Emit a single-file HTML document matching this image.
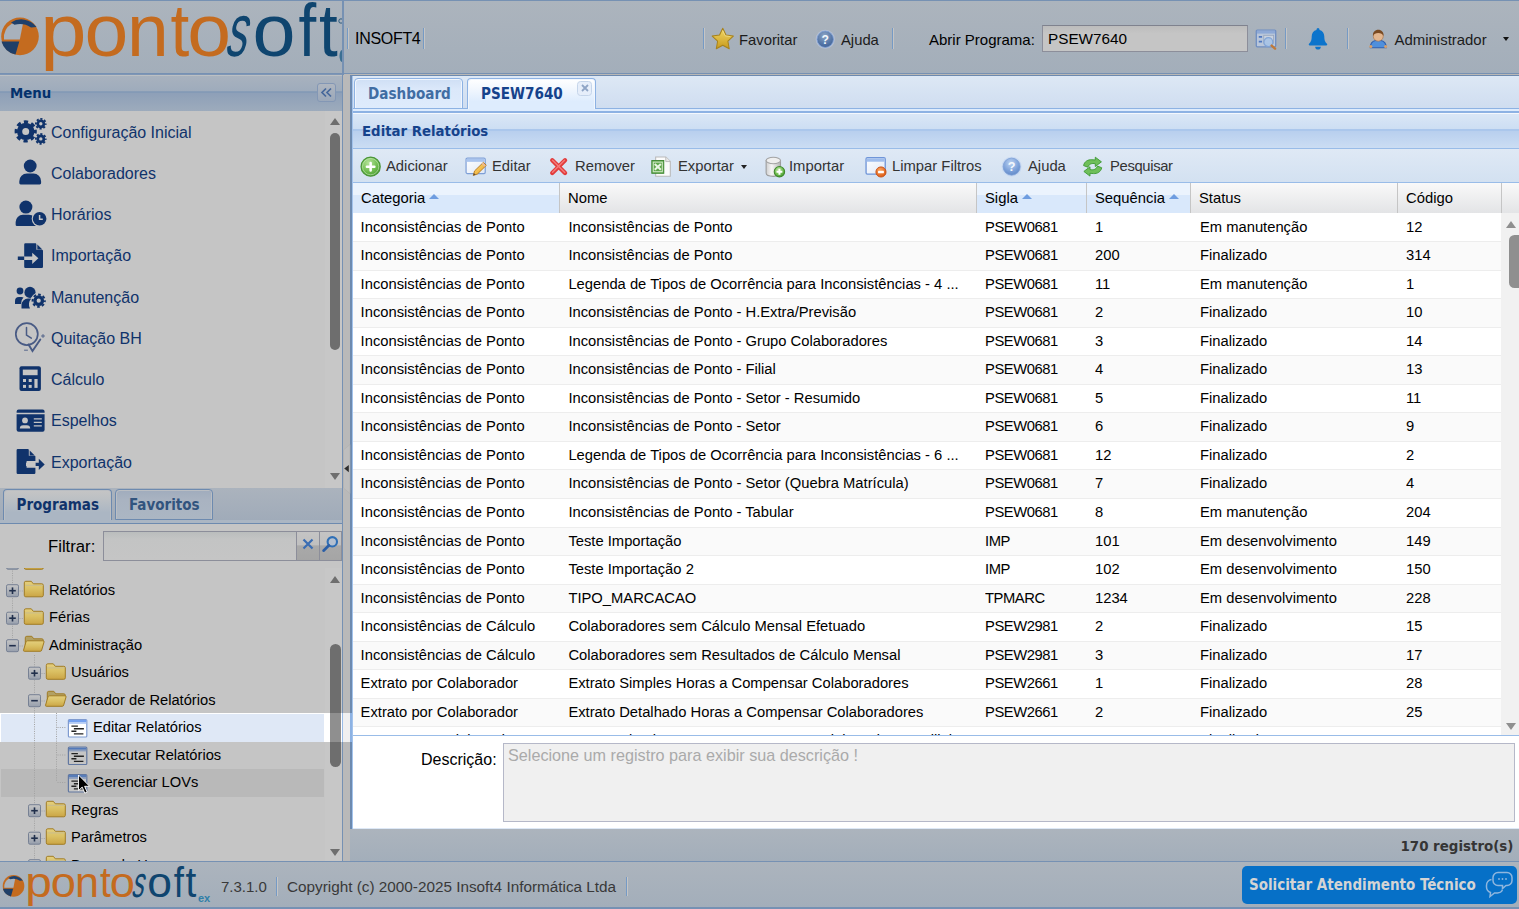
<!DOCTYPE html>
<html lang="pt-BR"><head><meta charset="utf-8"><title>Editar Relatórios</title>
<style>
html,body{margin:0;padding:0;}
body{width:1519px;height:909px;overflow:hidden;position:relative;background:#a3aeba;
  font-family:"Liberation Sans","DejaVu Sans Condensed",sans-serif;font-size:14.7px;color:#000;}
.abs{position:absolute;}
.b{font-family:"DejaVu Sans Condensed","Liberation Sans",sans-serif;font-weight:bold;}
div,span{box-sizing:border-box;}
.t{position:absolute;white-space:nowrap;line-height:20px;height:20px;}
svg{position:absolute;overflow:visible;}
#hdr{left:0;top:0;width:1519px;height:75px;background:linear-gradient(#acb4bd,#a3aeba);border-top:1px solid #7691b3;border-bottom:2px solid #7691b3;}
.vsep{position:absolute;width:1px;background:#759ac5;top:27px;height:21px;}
.vsep:after{content:"";position:absolute;left:1px;top:0;width:1px;height:100%;background:#c5c5c5;}
#left{left:0;top:75px;width:342px;height:786px;background:#c5c5c5;}
#menuhd{left:0;top:0;width:342px;height:36px;background:linear-gradient(#bcc0c3 0,#bcc0c3 1px,#a8b2be 1px,#9eabbc 45%,#849ab6 46%,#849ab6 50%,#8ea0b8 51%,#9dabbc 100%);}
.mi{position:absolute;left:51px;white-space:nowrap;font-size:16px;line-height:22px;color:#10336b;}
#center{left:353px;top:76px;width:1166px;height:753px;background:#fff;}
.grow{position:absolute;left:0;width:1148px;height:28.53px;border-bottom:1px solid #ededed;background:#fff;}
.grow.alt{background:#fafafa;}
.c{position:absolute;top:0;line-height:27.6px;white-space:nowrap;overflow:hidden;font-size:14.75px}
.c0{left:7.6px;width:195px}.c1{left:215.4px;width:405px}.c2{left:632px;width:100px;letter-spacing:-0.45px}.c3{left:742px;width:95px}.c4{left:847px;width:195px}.c5{left:1053px;width:90px}
#tabbar{left:0;top:0;width:1166px;height:33px;background:linear-gradient(#dde8f5,#cfddf0);border-bottom:1px solid #8db2e3;z-index:1}
.tab{position:absolute;top:2px;height:31px;border:1px solid #8db2e3;border-radius:4px 4px 0 0;background:linear-gradient(#cfdff5 0,#dbe8fa 35%,#deebfc 100%);box-shadow:inset 1px 1px 0 #f1f6fd,inset -1px 0 0 #f1f6fd;}
.tab.act{background:linear-gradient(#ffffff 0,#f3f8fe 30%,#deecfd 75%,#deecfd 100%);height:31px;border-bottom:none}
.tab .t{top:4.5px;font-size:15.1px;color:#416da3;}
.tab.act .t{color:#15428b;}
#tstrip{left:0;top:33px;width:1166px;height:4px;background:#deecfd;border-bottom:2px solid #8db2e3;}
#phd{left:0;top:37px;width:1166px;height:36px;border-bottom:1px solid #99bce8;background:linear-gradient(#f4f8fd 0,#f4f8fd 1px,#dae7f6 1px,#cddef3 45%,#abc7ec 46%,#abc7ec 50%,#b8cfee 51%,#cbddf3 100%);}
#tb{left:0;top:73px;width:1166px;height:34px;background:linear-gradient(#dfe9f5,#d3e1f1);border-bottom:1px solid #99bce8;}
#tb .t{top:7.2px;color:#333;font-size:14.8px}
#ghd{left:0;top:107px;width:1166px;height:30px;background:linear-gradient(#f9f9f9,#e3e4e6);}
.gh{position:absolute;top:0;height:30px;border-right:1px solid #c5c5c5;line-height:30px;padding-left:8px;font-size:14.8px;white-space:nowrap;}
.gh.s{background:linear-gradient(#ebf3fd 0,#ebf3fd 40%,#d9e8fb 41%,#d9e8fb 100%);}
.gh i{display:inline-block;width:0;height:0;border:5px solid transparent;border-top:0;border-bottom:5px solid #6f9de0;margin-left:4px;vertical-align:4px}
.ltab{position:absolute;border:1px solid #6d8aaf;border-radius:4px 4px 0 0;background:linear-gradient(#a0acbd,#a9b3c1 35%,#abb6c3);box-shadow:inset 1px 1px 0 #babec3,inset -1px 0 0 #babec3;}
.ltab.act{background:linear-gradient(#c5c5c5 0,#bcc0c4 30%,#abb6c3 75%,#abb6c3 100%);border-bottom:none}
.ltab .t{font-size:15px;color:#32547e}
.ltab.act .t{color:#10336b}
.trg{width:23px;height:30px;border:1px solid #8c8e9a;border-left:none;background:linear-gradient(#c4c4c4 0,#c0c0c0 45%,#a9a9a9 50%,#a5a5a5 100%);}
</style></head>
<body>
<svg width="0" height="0" style="left:-10px;top:-10px"><defs>
<radialGradient id="gAdd" cx="0.4" cy="0.3" r="0.8"><stop offset="0" stop-color="#b5e39a"/><stop offset="0.6" stop-color="#6cba4c"/><stop offset="1" stop-color="#3f8f2c"/></radialGradient>
<radialGradient id="gHelp" cx="0.45" cy="0.3" r="0.8"><stop offset="0" stop-color="#bdd3f2"/><stop offset="0.6" stop-color="#7a9fd8"/><stop offset="1" stop-color="#5a82c2"/></radialGradient>
<radialGradient id="gHelpM" cx="0.45" cy="0.3" r="0.8"><stop offset="0" stop-color="#8ea6c6"/><stop offset="0.6" stop-color="#5576a7"/><stop offset="1" stop-color="#3a5c92"/></radialGradient>
<radialGradient id="gOr" cx="0.4" cy="0.3" r="0.8"><stop offset="0" stop-color="#f9a15a"/><stop offset="1" stop-color="#d9540f"/></radialGradient>
<linearGradient id="gWin" x1="0" y1="0" x2="1" y2="1"><stop offset="0" stop-color="#fff"/><stop offset="1" stop-color="#dfe8f6"/></linearGradient>
<linearGradient id="gPen" x1="0" y1="0" x2="1" y2="1"><stop offset="0" stop-color="#ffe27a"/><stop offset="1" stop-color="#e79a22"/></linearGradient>
<linearGradient id="gDb" x1="0" y1="0" x2="1" y2="0"><stop offset="0" stop-color="#d0d0d0"/><stop offset="0.4" stop-color="#f6f6f6"/><stop offset="1" stop-color="#b4b4b4"/></linearGradient>
<linearGradient id="gFold" x1="0" y1="0" x2="0" y2="1"><stop offset="0" stop-color="#f7dc83"/><stop offset="1" stop-color="#d9a93c"/></linearGradient>
<linearGradient id="gFoldM" x1="0" y1="0" x2="0" y2="1"><stop offset="0" stop-color="#e4cf7e"/><stop offset="0.5" stop-color="#dac063"/><stop offset="1" stop-color="#cba545"/></linearGradient>
<linearGradient id="gStar" x1="0" y1="0" x2="0" y2="1"><stop offset="0" stop-color="#f2d867"/><stop offset="1" stop-color="#c89a1c"/></linearGradient>
</defs></svg><div id="hdr" class="abs">
<svg width="342" height="73" style="left:0;top:-1px;overflow:hidden" viewBox="0 0 342 73"><circle cx="20" cy="36.400" r="18.800" fill="#c46b1f"/><path d="M23.500 21 L19.800 39.500 L4 39.500 A17 17 0 0 1 12 23.500 Z" fill="#a8b1bc"/><path d="M11 22.500 A18.800 18.800 0 0 1 36.500 27 L31 27.500 A20 20 0 0 0 14.500 24.800 Z" fill="#1f406b"/><path d="M1.500 41.500 L19.300 41.500 L15.500 54.600 A18.800 18.800 0 0 1 1.500 41.500 Z" fill="#1f3f68"/><text transform="translate(40.2 55.6) scale(1.11 1) " font-family="Liberation Sans, sans-serif" font-size="75" fill="#c46b1f">p</text><text transform="translate(84.6 55.6) scale(1.05 1) " font-family="Liberation Sans, sans-serif" font-size="75" fill="#c46b1f">o</text><text transform="translate(127 55.6) scale(1.0 1) " font-family="Liberation Sans, sans-serif" font-size="75" fill="#c46b1f">n</text><text transform="translate(170.5 55.6) scale(0.9 1) " font-family="Liberation Sans, sans-serif" font-size="75" fill="#c46b1f">t</text><text transform="translate(187.3 55.6) scale(1.05 1) " font-family="Liberation Sans, sans-serif" font-size="75" fill="#c46b1f">o</text><text transform="translate(224 55.6) scale(0.56 1) skewX(-22)" font-family="Liberation Sans, sans-serif" font-size="75" fill="#0f456f">s</text><text transform="translate(252.6 55.6) scale(1.03 1) " font-family="Liberation Sans, sans-serif" font-size="75" fill="#0f456f">o</text><text transform="translate(298.5 55.6) scale(0.85 1) " font-family="Liberation Sans, sans-serif" font-size="75" fill="#0f456f">f</text><text transform="translate(319 55.6) scale(0.9 1) " font-family="Liberation Sans, sans-serif" font-size="75" fill="#0f456f">t</text><circle cx="341" cy="21" r="2.200" fill="none" stroke="#0f456f" stroke-width="0.800"/><ellipse cx="342" cy="56" rx="2.500" ry="6" fill="#3b6f93"/></svg>
<div class="abs" style="left:342px;top:-1px;width:2px;height:74px;background:#7691b3"></div>
<div class="vsep" style="left:346.500px"></div>
<div class="t" style="left:355px;top:27.500px;font-size:16px;letter-spacing:-0.300px">INSOFT4</div>
<div class="vsep" style="left:423px"></div>
<div class="vsep" style="left:703px"></div>
<svg style="left:711px;top:25.5px" width="23.5" height="23.5" viewBox="0 0 16 16"><path d="M8 .800l2.200 4.700 5 .700-3.700 3.500.900 5.100L8 12.400l-4.400 2.400.900-5.100L.800 6.200l5-.700z" fill="url(#gStar)" stroke="#a7821d" stroke-width="0.700" stroke-linejoin="round"/><path d="M8 2.500l1.600 3.500 3.600.500" fill="none" stroke="#f3e39a" stroke-width="0.600" opacity="0.700"/></svg>
<div class="t" style="left:739px;top:28.700px;font-size:14.800px;color:#1c1c1c">Favoritar</div>
<svg style="left:814.5px;top:27.5px" width="20.5" height="20.5" viewBox="0 0 16 16"><circle cx="8" cy="8" r="7.5" fill="#b4bfd2"/><circle cx="8" cy="8" r="6.4" fill="url(#gHelpM)" stroke="#7d9fd6" stroke-width="0.6"/><text x="8" y="11.600" text-anchor="middle" font-family="Liberation Sans, sans-serif" font-weight="bold" font-size="9.500" fill="#f4f8fd">?</text></svg>
<div class="t" style="left:841px;top:28.700px;font-size:14.800px;color:#1c1c1c">Ajuda</div>
<div class="vsep" style="left:892px"></div>
<div class="t" style="left:929px;top:28.700px;font-size:15px">Abrir Programa:</div>
<div class="abs" style="left:1042px;top:24px;width:206px;height:27px;background:linear-gradient(#bcbcbc,#c5c5c5 30%);border:1px solid #8c8e9a;border-top-color:#7f828e"></div>
<div class="t" style="left:1048px;top:27.500px;font-size:15.300px">PSEW7640</div>
<svg style="left:1255px;top:27.6px" width="22" height="21" viewBox="0 0 16 16"><rect x="0.600" y="0.800" width="14.800" height="12.800" rx="0.800" fill="#b9c6da" stroke="#6f8ec2" stroke-width="1"/><rect x="1.100" y="1.300" width="13.800" height="2.200" fill="#8ea9d6"/><path d="M2.500 6h2.500M2.500 9.600h2.500" stroke="#4f78c0" stroke-width="1.300"/><rect x="6.300" y="4.800" width="7.500" height="6" fill="#c9d2df" stroke="#97a5bb" stroke-width="0.600"/><circle cx="9.800" cy="10" r="3.400" fill="#a9c4e6" stroke="#7fa3d6" stroke-width="0.900" opacity="0.950"/><path d="M12.300 12.600l2.600 2.400" stroke="#c07a3a" stroke-width="1.800" stroke-linecap="round"/></svg>
<div class="vsep" style="left:1284.500px"></div>
<svg style="left:1307px;top:25.500px" width="22" height="24" viewBox="0 0 22 24"><path d="M11 1a1.500 1.500 0 0 1 1.500 1.500v.600c3 .700 4.800 3.300 4.800 6.400 0 4.500 1.300 5.900 2.700 7.200.500.500.300 1.800-.800 1.800H2.800c-1.100 0-1.300-1.300-.800-1.800 1.400-1.300 2.700-2.700 2.700-7.200 0-3.100 1.800-5.700 4.800-6.400v-.600A1.500 1.500 0 0 1 11 1zM8.200 19.800h5.600a2.800 2.800 0 0 1 -5.600 0z" fill="#0c74cc"/></svg>
<div class="vsep" style="left:1347px"></div>
<svg style="left:1367.5px;top:27.8px" width="20.5" height="20.5" viewBox="0 0 16 16"><path d="M1.800 14.600c0-3.500 2.300-5.200 4-5.600h4.400c1.700.400 4 2.100 4 5.600z" fill="#4f8fdc" stroke="#2f5fae" stroke-width="0.900"/><circle cx="2.200" cy="13.600" r="1.200" fill="#d9a06a"/><circle cx="13.800" cy="13.600" r="1.200" fill="#d9a06a"/><circle cx="8" cy="5.600" r="3.900" fill="#e3b68f" stroke="#a9744a" stroke-width="0.500"/><path d="M3.900 5.400c-.300-3 1.600-4.800 4.100-4.800s4.400 1.800 4.100 4.800c-.900-1.500-2-2.200-4.100-2.200s-3.200.700-4.100 2.200z" fill="#7a4a22"/></svg>
<div class="t" style="left:1394.500px;top:28.700px;font-size:14.950px;color:#1c1c1c">Administrador</div>
<div class="abs" style="left:1503px;top:36.300px;width:0;height:0;border:3.650px solid transparent;border-top:4.600px solid #111;"></div>
</div>
<div class="abs" style="left:0;top:74px;width:342px;height:1px;background:#7f96b5"></div>
<div class="abs" style="left:344px;top:74px;width:1175px;height:1px;background:#b9b8b6"></div>
<div class="abs" style="left:343px;top:75px;width:7px;height:786px;background:#b9b9b9"></div>
<div class="abs" style="left:350px;top:75px;width:1169px;height:1px;background:#6d8aaf"></div>
<div class="abs" style="left:350px;top:75px;width:2px;height:786px;background:#6d8aaf"></div>
<div class="abs" style="left:352px;top:76px;width:1px;height:753px;background:#a3c3ec"></div><div id="left" class="abs">
<div id="menuhd" class="abs"><div class="t b" style="left:10px;top:7.500px;color:#03316c;font-size:14.800px">Menu</div></div>
<div class="abs" style="left:342px;top:-1px;width:1px;height:787px;background:#7691b3"></div>
<svg width="342" height="500" viewBox="0 74 342 500" style="left:0;top:-1px"><circle cx="25.7" cy="131.4" r="6.10" fill="none" stroke="#10336b" stroke-width="5.20"/><circle cx="25.7" cy="131.4" r="9.50" fill="none" stroke="#10336b" stroke-width="3.20" stroke-dasharray="4.178 3.283" stroke-dashoffset="2.089"/><circle cx="40.8" cy="123.8" r="3.05" fill="none" stroke="#10336b" stroke-width="2.70"/><circle cx="40.8" cy="123.8" r="4.90" fill="none" stroke="#10336b" stroke-width="1.80" stroke-dasharray="2.155 1.693" stroke-dashoffset="1.078"/><circle cx="40.8" cy="138.9" r="3.05" fill="none" stroke="#10336b" stroke-width="2.70"/><circle cx="40.8" cy="138.9" r="4.90" fill="none" stroke="#10336b" stroke-width="1.80" stroke-dasharray="2.155 1.693" stroke-dashoffset="1.078"/><circle cx="30.2" cy="166.0" r="6.4" fill="#10336b"/><path d="M19.299999999999997 183.1 v-1.87 a7.63 7.63 0 0 1 7.63 -7.63 h6.540000000000001 a7.63 7.63 0 0 1 7.63 7.63 v1.87 a1.3 1.3 0 0 1 -1.3 1.3 h-19.2 a1.3 1.3 0 0 1 -1.3 -1.3z" fill="#10336b"/><circle cx="25.9" cy="207.1" r="6.5" fill="#10336b"/><path d="M15.649999999999999 224.69999999999996 v-2.7249999999999988 a7.175 7.175 0 0 1 7.175 -7.175 h6.15 a7.175 7.175 0 0 1 7.175 7.175 v2.7249999999999988 a1.3 1.3 0 0 1 -1.3 1.3 h-17.9 a1.3 1.3 0 0 1 -1.3 -1.3z" fill="#10336b"/><circle cx="39.6" cy="218.8" r="7.9" fill="#c5c5c5"/><circle cx="39.6" cy="218.8" r="6.8" fill="#10336b"/><path d="M39.6 215v4.2h3.2" fill="none" stroke="#c5c5c5" stroke-width="1.5"/><path d="M24.2 243.2h11.5l7.300 7.300v16.200a1.200 1.200 0 0 1 -1.200 1.200h-16.400a1.200 1.200 0 0 1 -1.200 -1.200v-6.600h8v3.800l6.200-5.600-6.200-5.600v3.900h-8v-12.200a1.200 1.200 0 0 1 1.200 -1.200z" fill="#10336b"/><path d="M36.400 243.2v6.600h6.600z" fill="#c5c5c5"/><path d="M37.300 244.600l5 5h-5z" fill="#10336b"/><rect x="17.800" y="256.500" width="6.400" height="3.500" fill="#10336b"/><circle cx="20" cy="291" r="3.400" fill="#10336b"/><path d="M15 304v-3a4 4 0 0 1 4-4h2.500a4 4 0 0 1 2 .6 8 8 0 0 0-2.500 6.400z" fill="#10336b"/><circle cx="30" cy="292.400" r="5.600" fill="#10336b"/><path d="M21.500 308.500v-3.500a6.500 6.500 0 0 1 6.500-6.500h3.600a8 8 0 0 0 -1.600 10z" fill="#10336b"/><circle cx="38.700" cy="300.700" r="8" fill="#c5c5c5"/><circle cx="38.7" cy="300.7" r="3.75" fill="none" stroke="#10336b" stroke-width="3.30"/><circle cx="38.7" cy="300.7" r="6.10" fill="none" stroke="#10336b" stroke-width="2.00" stroke-dasharray="2.683 2.108" stroke-dashoffset="1.341"/><g fill="none" stroke="#34497a" stroke-linecap="round" opacity="0.85"><circle cx="26.800" cy="334.100" r="11" stroke-width="1.700"/><path d="M26.500 327.500v7.500l4.800 3.200" stroke-width="1.500"/><path d="M28.500 344.500l4 6.500 7.800-11.500" stroke-width="1.900"/><path d="M41.500 336h3M43 334.500v3M24.500 350.200h3" stroke-width="0.900"/></g><rect x="19.500" y="366.200" width="21.400" height="24.700" rx="2" fill="#10336b"/><rect x="22.800" y="369.600" width="14.800" height="5.600" fill="#c5c5c5"/><rect x="23" y="379" width="3" height="3" fill="#c5c5c5"/><rect x="28.7" y="379" width="3" height="3" fill="#c5c5c5"/><rect x="34.4" y="379" width="3.2" height="8.9" fill="#c5c5c5"/><rect x="23" y="384.9" width="3" height="3" fill="#c5c5c5"/><rect x="28.7" y="384.9" width="3" height="3" fill="#c5c5c5"/><path d="M16.600 411.400a2 2 0 0 1 2-2h24a2 2 0 0 1 2 2v1.400h-28z" fill="#10336b"/><path d="M16.600 414.200h28v15.600a2 2 0 0 1 -2 2h-24a2 2 0 0 1 -2 -2z" fill="#10336b"/><circle cx="25" cy="420.400" r="2.900" fill="#c5c5c5"/><path d="M19.800 428.600a3.400 3.400 0 0 1 3.400-3.400h3.600a3.400 3.400 0 0 1 3.400 3.400z" fill="#c5c5c5"/><path d="M33.800 418.800h8M33.800 422.300h8M33.800 425.800h8" stroke="#c5c5c5" stroke-width="1.300"/><path d="M17.800 449.100h10.400l7.200 7.200v4.800h-8.800v6.600h8.800v5a1.200 1.200 0 0 1 -1.200 1.200h-16.400a1.200 1.200 0 0 1 -1.200 -1.200v-22.400a1.200 1.200 0 0 1 1.200 -1.200z" fill="#10336b"/><path d="M28.800 449.100v6.600h6.600z" fill="#c5c5c5"/><path d="M29.700 450.400l5 5h-5z" fill="#10336b"/><path d="M35.400 462.700h3.400v-4l5.900 5.700-5.900 5.700v-4h-3.400z" fill="#10336b"/><rect x="26" y="462.600" width="9.400" height="3.500" fill="#c5c5c5"/></svg>
<div class="mi" style="top:46.5px">Configuração Inicial</div>
<div class="mi" style="top:87.8px">Colaboradores</div>
<div class="mi" style="top:129.0px">Horários</div>
<div class="mi" style="top:170.2px">Importação</div>
<div class="mi" style="top:211.5px">Manutenção</div>
<div class="mi" style="top:252.8px">Quitação BH</div>
<div class="mi" style="top:294.0px">Cálculo</div>
<div class="mi" style="top:335.2px">Espelhos</div>
<div class="mi" style="top:376.5px">Exportação</div>
<div class="abs" style="left:317px;top:8px;width:19px;height:19px;border:1px solid #8397b5;border-radius:3px;background:linear-gradient(#afb6c0,#9ba8ba)"></div>
<svg style="left:320px;top:12px" width="13" height="11" viewBox="0 0 13 11"><path d="M6 1.500L2 5.500l4 4M11 1.500L7 5.500l4 4" fill="none" stroke="#46689b" stroke-width="1.700"/></svg>
<div class="abs" style="left:325px;top:36px;width:17px;height:377px;background:#c7c7c7"></div>
<div class="abs" style="left:330px;top:43px;width:0;height:0;border:5px solid transparent;border-top:0;border-bottom:7px solid #6e6e6e"></div>
<div class="abs" style="left:329.500px;top:58px;width:10.500px;height:217px;border-radius:5px;background:#6e6e6e"></div>
<div class="abs" style="left:330px;top:398px;width:0;height:0;border:5px solid transparent;border-bottom:0;border-top:7px solid #6e6e6e"></div>
<div class="abs" style="left:0;top:413px;width:342px;height:32px;background:linear-gradient(#abb3bd,#a0abb9)"></div>
<div class="abs" style="left:0;top:445px;width:342px;height:4px;background:#abb6c3;border-bottom:1px solid #6d8aaf"></div>
<div class="ltab act" style="left:3px;top:414px;width:109px;height:31px"><div class="t b" style="left:12.500px;top:4.500px">Programas</div></div>
<div class="ltab" style="left:115px;top:414px;width:98px;height:31px"><div class="t b" style="left:13px;top:4.500px">Favoritos</div></div>
<div class="t" style="left:48px;top:461.5px;font-size:16.700px">Filtrar:</div>
<div class="abs" style="left:103px;top:456px;width:194px;height:30px;border:1px solid #8c8e9a;background:linear-gradient(#babdbd 0,#c3c4c4 25%,#c5c5c5 100%)"></div>
<div class="abs trg" style="left:296.500px;top:456px"></div><div class="abs trg" style="left:319.500px;top:456px;width:22.500px"></div>
<svg style="left:301.500px;top:463px" width="12" height="12" viewBox="0 0 12 12"><path d="M1.500 1.500l9 9M10.500 1.500l-9 9" stroke="#3a6db3" stroke-width="2.200"/></svg>
<svg style="left:321px;top:460px" width="19" height="19" viewBox="0 0 19 19"><circle cx="11.300" cy="6.800" r="4.700" fill="#b4c0d0" stroke="#2f6fb6" stroke-width="2.100"/><path d="M8 10.300L2.500 15.700" stroke="#2a5ea6" stroke-width="2.600" stroke-linecap="round"/></svg>
<div class="abs" style="left:0;top:493px;width:342px;height:293px;overflow:hidden" id="tree">
<div class="abs" style="left:0;top:145px;width:342px;height:29px;background:#fff"></div>
<div class="abs" style="left:1px;top:146px;width:323px;height:28px;background:#dfe8f6"></div>
<div class="abs" style="left:1px;top:201px;width:323px;height:27.500px;background:#b9b9b9"></div>
<div class="t" style="left:49px;top:11.5px;font-size:14.700px">Relatórios</div>
<div class="t" style="left:49px;top:39.0px;font-size:14.700px">Férias</div>
<div class="t" style="left:49px;top:66.5px;font-size:14.700px">Administração</div>
<div class="t" style="left:71px;top:94.0px;font-size:14.700px">Usuários</div>
<div class="t" style="left:71px;top:121.5px;font-size:14.700px">Gerador de Relatórios</div>
<div class="t" style="left:93px;top:149.0px;font-size:14.700px">Editar Relatórios</div>
<div class="t" style="left:93px;top:176.5px;font-size:14.700px">Executar Relatórios</div>
<div class="t" style="left:93px;top:204.0px;font-size:14.700px">Gerenciar LOVs</div>
<div class="t" style="left:71px;top:231.5px;font-size:14.700px">Regras</div>
<div class="t" style="left:71px;top:259.0px;font-size:14.700px">Parâmetros</div>
<div class="t" style="left:71px;top:286.5px;font-size:14.700px">Banco de Horas</div>
<svg style="left:0;top:0" width="342" height="293" viewBox="0 568 342 293"><defs><linearGradient id="gBox" x1="0" y1="0" x2="0" y2="1"><stop offset="0" stop-color="#c5c5c5"/><stop offset="1" stop-color="#979fad"/></linearGradient></defs><path d="M12.5 566V638" stroke="#a2a2a2" stroke-width="1" stroke-dasharray="1 1.300"/><path d="M34.5 655V861" stroke="#a2a2a2" stroke-width="1" stroke-dasharray="1 1.300"/><path d="M56.5 713V782" stroke="#a2a2a2" stroke-width="1" stroke-dasharray="1 1.300"/><rect x="6.5" y="557.2" width="12" height="12" rx="1.500" fill="url(#gBox)" stroke="#778194" stroke-width="1"/><path d="M9.2 563.2h6.600" stroke="#212f4c" stroke-width="1.600"/><path d="M12.5 559.9000000000001v6.600" stroke="#212f4c" stroke-width="1.600"/><path d="M19.5 563.5H23.5" stroke="#a2a2a2" stroke-width="1" stroke-dasharray="1 1.300"/><path d="M24.3 567.8v-12.500a1.500 1.500 0 0 1 1.500-1.500h5.500l2 2.500h8.500a1.500 1.500 0 0 1 1.500 1.500v10a1.500 1.500 0 0 1 -1.500 1.500h-16a1.500 1.500 0 0 1 -1.500-1.500z" fill="url(#gFoldM)" stroke="#a17c25" stroke-width="1"/><path d="M25.3 557.9h17.500" stroke="#c5bc94" stroke-width="1" opacity="0.800"/><rect x="6.5" y="584.7" width="12" height="12" rx="1.500" fill="url(#gBox)" stroke="#778194" stroke-width="1"/><path d="M9.2 590.7h6.600" stroke="#212f4c" stroke-width="1.600"/><path d="M12.5 587.4000000000001v6.600" stroke="#212f4c" stroke-width="1.600"/><path d="M19.5 591.0H23.5" stroke="#a2a2a2" stroke-width="1" stroke-dasharray="1 1.300"/><path d="M24.3 595.3v-12.500a1.500 1.500 0 0 1 1.500-1.500h5.500l2 2.500h8.500a1.500 1.500 0 0 1 1.500 1.500v10a1.500 1.500 0 0 1 -1.500 1.500h-16a1.500 1.500 0 0 1 -1.500-1.500z" fill="url(#gFoldM)" stroke="#a17c25" stroke-width="1"/><path d="M25.3 585.4h17.500" stroke="#c5bc94" stroke-width="1" opacity="0.800"/><rect x="6.5" y="612.2" width="12" height="12" rx="1.500" fill="url(#gBox)" stroke="#778194" stroke-width="1"/><path d="M9.2 618.2h6.600" stroke="#212f4c" stroke-width="1.600"/><path d="M12.5 614.9000000000001v6.600" stroke="#212f4c" stroke-width="1.600"/><path d="M19.5 618.5H23.5" stroke="#a2a2a2" stroke-width="1" stroke-dasharray="1 1.300"/><path d="M24.3 622.8v-12.500a1.500 1.500 0 0 1 1.500-1.500h5.500l2 2.500h8.500a1.500 1.500 0 0 1 1.500 1.500v10a1.500 1.500 0 0 1 -1.500 1.500h-16a1.500 1.500 0 0 1 -1.500-1.500z" fill="url(#gFoldM)" stroke="#a17c25" stroke-width="1"/><path d="M25.3 612.9h17.500" stroke="#c5bc94" stroke-width="1" opacity="0.800"/><rect x="6.5" y="639.7" width="12" height="12" rx="1.500" fill="url(#gBox)" stroke="#778194" stroke-width="1"/><path d="M9.2 645.7h6.600" stroke="#212f4c" stroke-width="1.600"/><path d="M19.5 646.0H23.5" stroke="#a2a2a2" stroke-width="1" stroke-dasharray="1 1.300"/><path d="M25.3 648.8v-11a1.500 1.500 0 0 1 1.500-1.500h5l2 2.500h8a1.500 1.500 0 0 1 1.500 1.500v2.500" fill="#b2a063" stroke="#a17c25" stroke-width="1"/><path d="M23.5 650.3l2.500-8.500a1.500 1.500 0 0 1 1.500-1h15.500a1 1 0 0 1 1 1.300l-2.300 8a1.500 1.500 0 0 1 -1.500 1.200h-15.500a1 1 0 0 1 -1.200-1z" fill="url(#gFoldM)" stroke="#a17c25" stroke-width="1"/><rect x="28.5" y="667.2" width="12" height="12" rx="1.500" fill="url(#gBox)" stroke="#778194" stroke-width="1"/><path d="M31.2 673.2h6.600" stroke="#212f4c" stroke-width="1.600"/><path d="M34.5 669.9000000000001v6.600" stroke="#212f4c" stroke-width="1.600"/><path d="M41.5 673.5H45.5" stroke="#a2a2a2" stroke-width="1" stroke-dasharray="1 1.300"/><path d="M46.3 677.8v-12.500a1.500 1.500 0 0 1 1.500-1.500h5.500l2 2.500h8.500a1.500 1.500 0 0 1 1.500 1.500v10a1.500 1.500 0 0 1 -1.500 1.500h-16a1.500 1.500 0 0 1 -1.500-1.500z" fill="url(#gFoldM)" stroke="#a17c25" stroke-width="1"/><path d="M47.3 667.9h17.500" stroke="#c5bc94" stroke-width="1" opacity="0.800"/><rect x="28.5" y="694.7" width="12" height="12" rx="1.500" fill="url(#gBox)" stroke="#778194" stroke-width="1"/><path d="M31.2 700.7h6.600" stroke="#212f4c" stroke-width="1.600"/><path d="M41.5 701.0H45.5" stroke="#a2a2a2" stroke-width="1" stroke-dasharray="1 1.300"/><path d="M47.3 703.8v-11a1.500 1.500 0 0 1 1.500-1.500h5l2 2.500h8a1.500 1.500 0 0 1 1.500 1.500v2.500" fill="#b2a063" stroke="#a17c25" stroke-width="1"/><path d="M45.5 705.3l2.500-8.500a1.500 1.500 0 0 1 1.500-1h15.500a1 1 0 0 1 1 1.300l-2.300 8a1.500 1.500 0 0 1 -1.500 1.200h-15.500a1 1 0 0 1 -1.200-1z" fill="url(#gFoldM)" stroke="#a17c25" stroke-width="1"/><path d="M57.5 727.5H66" stroke="#a2a2a2" stroke-width="1" stroke-dasharray="1 1.300"/><rect x="68.4" y="719.5" width="18.400" height="17.500" rx="1" fill="#ffffff" stroke="#7f9bd0" stroke-width="1.200"/><rect x="69.0" y="720.1" width="17.200" height="3.800" fill="#b5cdf6"/><rect x="69.0" y="720.1" width="17.200" height="1.800" fill="#6c9cf0"/><path d="M71.4 726.1h6.500M73.9 728.7h10M71.4 731.3h5M73.9 733.9h9.500" stroke="#222" stroke-width="1.400"/><path d="M57.5 755.0H66" stroke="#a2a2a2" stroke-width="1" stroke-dasharray="1 1.300"/><rect x="68.4" y="747.0" width="18.400" height="17.500" rx="1" fill="#c5c5c5" stroke="#6278a1" stroke-width="1.200"/><rect x="69.0" y="747.6" width="17.200" height="3.800" fill="#8c9ebe"/><rect x="69.0" y="747.6" width="17.200" height="1.800" fill="#5379b9"/><path d="M71.4 753.6h6.500M73.9 756.2h10M71.4 758.8h5M73.9 761.4h9.500" stroke="#222" stroke-width="1.400"/><path d="M57.5 782.5H66" stroke="#a2a2a2" stroke-width="1" stroke-dasharray="1 1.300"/><rect x="68.4" y="774.5" width="18.400" height="17.500" rx="1" fill="#c5c5c5" stroke="#6278a1" stroke-width="1.200"/><rect x="69.0" y="775.1" width="17.200" height="3.800" fill="#8c9ebe"/><rect x="69.0" y="775.1" width="17.200" height="1.800" fill="#5379b9"/><path d="M71.4 781.1h6.500M73.9 783.7h10M71.4 786.3h5M73.9 788.9h9.500" stroke="#222" stroke-width="1.400"/><rect x="28.5" y="804.7" width="12" height="12" rx="1.500" fill="url(#gBox)" stroke="#778194" stroke-width="1"/><path d="M31.2 810.7h6.600" stroke="#212f4c" stroke-width="1.600"/><path d="M34.5 807.4000000000001v6.600" stroke="#212f4c" stroke-width="1.600"/><path d="M41.5 811.0H45.5" stroke="#a2a2a2" stroke-width="1" stroke-dasharray="1 1.300"/><path d="M46.3 815.3v-12.500a1.500 1.500 0 0 1 1.500-1.500h5.500l2 2.500h8.500a1.500 1.500 0 0 1 1.500 1.500v10a1.500 1.500 0 0 1 -1.500 1.500h-16a1.500 1.500 0 0 1 -1.500-1.500z" fill="url(#gFoldM)" stroke="#a17c25" stroke-width="1"/><path d="M47.3 805.4h17.500" stroke="#c5bc94" stroke-width="1" opacity="0.800"/><rect x="28.5" y="832.2" width="12" height="12" rx="1.500" fill="url(#gBox)" stroke="#778194" stroke-width="1"/><path d="M31.2 838.2h6.600" stroke="#212f4c" stroke-width="1.600"/><path d="M34.5 834.9000000000001v6.600" stroke="#212f4c" stroke-width="1.600"/><path d="M41.5 838.5H45.5" stroke="#a2a2a2" stroke-width="1" stroke-dasharray="1 1.300"/><path d="M46.3 842.8v-12.500a1.500 1.500 0 0 1 1.500-1.500h5.500l2 2.500h8.500a1.500 1.500 0 0 1 1.500 1.500v10a1.500 1.500 0 0 1 -1.500 1.500h-16a1.500 1.500 0 0 1 -1.500-1.500z" fill="url(#gFoldM)" stroke="#a17c25" stroke-width="1"/><path d="M47.3 832.9h17.500" stroke="#c5bc94" stroke-width="1" opacity="0.800"/><rect x="28.5" y="859.7" width="12" height="12" rx="1.500" fill="url(#gBox)" stroke="#778194" stroke-width="1"/><path d="M31.2 865.7h6.600" stroke="#212f4c" stroke-width="1.600"/><path d="M34.5 862.4000000000001v6.600" stroke="#212f4c" stroke-width="1.600"/><path d="M41.5 866.0H45.5" stroke="#a2a2a2" stroke-width="1" stroke-dasharray="1 1.300"/><path d="M46.3 870.3v-12.500a1.500 1.500 0 0 1 1.500-1.500h5.500l2 2.500h8.500a1.500 1.500 0 0 1 1.500 1.500v10a1.500 1.500 0 0 1 -1.500 1.500h-16a1.500 1.500 0 0 1 -1.500-1.500z" fill="url(#gFoldM)" stroke="#a17c25" stroke-width="1"/><path d="M47.3 860.4h17.500" stroke="#c5bc94" stroke-width="1" opacity="0.800"/></svg>
<div class="abs" style="left:325px;top:0;width:17px;height:295px;background:#c7c7c7"></div>
<div class="abs" style="left:324px;top:145px;width:18px;height:29px;background:#fff"></div>
<div class="abs" style="left:330px;top:8px;width:0;height:0;border:5px solid transparent;border-top:0;border-bottom:7px solid #6e6e6e"></div>
<div class="abs" style="left:330px;top:76px;width:11px;height:123px;border-radius:5.500px;background:#6e6e6e"></div>
<div class="abs" style="left:330px;top:145px;width:11px;height:29px;background:#8f8f8f"></div>
<div class="abs" style="left:330px;top:281px;width:0;height:0;border:5px solid transparent;border-bottom:0;border-top:7px solid #6e6e6e"></div>
<svg style="left:77px;top:206px" width="14" height="21" viewBox="0 0 14 21"><path d="M1.500 1v15.500l3.700-3.400 2.600 6 2.400-1-2.600-5.800h5z" fill="#000" stroke="#fff" stroke-width="0.900"/></svg>
</div>
</div>
<div class="abs" style="left:342px;top:713px;width:1px;height:29px;background:#99bce8"></div>
<div class="abs" style="left:343px;top:713px;width:7px;height:29px;background:#f0f0f0"></div>
<div class="abs" style="left:350px;top:713px;width:2px;height:29px;background:#8db2e3"></div>
<svg style="left:343px;top:444px" width="7" height="50" viewBox="0 0 7 50"><path d="M7 .500L.500 6v38L7 49.500z" fill="#bebebe" stroke="#b0b0b0" stroke-width="0.600"/><path d="M5.800 21v7.200L1.200 24.600z" fill="#2e2e2e"/></svg><div id="center" class="abs">
<div id="tabbar" class="abs">
<div class="tab" style="left:1px;width:109px"><div class="t b" style="left:13px">Dashboard</div></div>
<div class="tab act" style="left:114px;width:129px"><div class="t b" style="left:13px">PSEW7640</div>
<div class="abs" style="left:109px;top:1.500px;width:15px;height:15px;border:1px solid #c5d5ea;border-radius:3.500px;background:#e6eefa"></div><svg style="left:112.500px;top:5px" width="8" height="8" viewBox="0 0 8 8"><path d="M1 1l6 6M7 1l-6 6" stroke="#8fa5c6" stroke-width="1.800"/></svg>
</div></div>
<div id="tstrip" class="abs"></div>
<div id="phd" class="abs"><div class="t b" style="left:9px;top:7.500px;color:#15428b;font-size:14.800px">Editar Relatórios</div></div>
<div id="tb" class="abs">
<svg style="left:7px;top:6.5px" width="21.3" height="21.3" viewBox="0 0 16 16"><circle cx="8" cy="8" r="7.2" fill="url(#gAdd)" stroke="#4b9638" stroke-width="0.9"/><circle cx="8" cy="8" r="6.1" fill="none" stroke="#d3efc3" stroke-width="0.6" opacity="0.7"/><path d="M8 5.200v5.600M5.200 8h5.600" stroke="#fff" stroke-width="1.900" stroke-linecap="round"/></svg><svg style="left:112px;top:6.5px" width="21.3" height="21.3" viewBox="0 0 16 16"><rect x="0.8" y="1.6" width="14.4" height="11.6" rx="1" fill="url(#gWin)" stroke="#7e9fd6" stroke-width="0.9"/><rect x="1.3" y="2" width="13.4" height="2.4" fill="#a9c4ee"/><path d="M6.2 14.6l1-3.4 6.6-6.4 2.2 2.2-6.6 6.5z" fill="url(#gPen)" stroke="#b5761c" stroke-width="0.7" stroke-linejoin="round"/><path d="M6.2 14.6l.5-1.8 1.3 1.3z" fill="#5a4a3a"/><path d="M13 5.4l2.2 2.2" stroke="#e9b9a0" stroke-width="1.2"/></svg><svg style="left:195px;top:6.5px" width="21.3" height="21.3" viewBox="0 0 16 16"><path d="M3.2 3.2l9.6 9.6M12.8 3.2l-9.6 9.6" stroke="#e23b3b" stroke-width="3.3" stroke-linecap="round"/><path d="M3.4 3.2l9.2 9.2M12.4 3.2l-9 9" stroke="#f47a7a" stroke-width="1.1" stroke-linecap="round"/></svg><svg style="left:298px;top:6.5px" width="21.3" height="21.3" viewBox="0 0 16 16"><path d="M3.5 .8h7.6l3.4 3.4v11H3.5z" fill="#fbfbfb" stroke="#b9b9b9" stroke-width="0.8"/><path d="M11.1 .8v3.4h3.4" fill="#e9e9e9" stroke="#b9b9b9" stroke-width="0.7"/><rect x="0.6" y="3.4" width="9" height="9.6" fill="#5ea54a" stroke="#3f8732" stroke-width="0.7"/><rect x="1.7" y="4.6" width="6.8" height="7.2" fill="none" stroke="#cfe8c5" stroke-width="0.8"/><path d="M2.8 6l4.6 4.4M7.4 6l-4.6 4.4" stroke="#e8f5e2" stroke-width="1.5"/></svg><svg style="left:411px;top:6.5px" width="21.3" height="21.3" viewBox="0 0 16 16"><path d="M1.6 3.4v9.4c0 1.5 2.5 2.5 5.4 2.5s5.4-1 5.4-2.5V3.4z" fill="url(#gDb)" stroke="#9c9c9c" stroke-width="0.8"/><ellipse cx="7" cy="3.4" rx="5.4" ry="2.4" fill="#efefef" stroke="#a3a3a3" stroke-width="0.8"/><circle cx="11.6" cy="11.8" r="3.9" fill="url(#gAdd)" stroke="#3f8a2c" stroke-width="0.8"/><path d="M11.6 9.6v4.4M9.4 11.8h4.4" stroke="#fff" stroke-width="1.5"/></svg><svg style="left:512px;top:6.5px" width="21.3" height="21.3" viewBox="0 0 16 16"><rect x="0.8" y="1.2" width="14.4" height="12.4" rx="1" fill="url(#gWin)" stroke="#6f95d8" stroke-width="1"/><rect x="1.3" y="1.7" width="13.4" height="2.6" fill="#9fbdec"/><circle cx="12" cy="12" r="3.8" fill="url(#gOr)" stroke="#c74d10" stroke-width="0.7"/><rect x="9.8" y="11.1" width="4.4" height="1.8" rx="0.4" fill="#fff"/></svg><svg style="left:648px;top:6.5px" width="21.3" height="21.3" viewBox="0 0 16 16"><circle cx="8" cy="8" r="7.5" fill="#c9daf2"/><circle cx="8" cy="8" r="6.4" fill="url(#gHelp)" stroke="#7d9fd6" stroke-width="0.6"/><text x="8" y="11.600" text-anchor="middle" font-family="Liberation Sans, sans-serif" font-weight="bold" font-size="9.500" fill="#f4f8fd">?</text></svg><svg style="left:729px;top:6.5px" width="21.3" height="21.3" viewBox="0 0 16 16"><path d="M1.2 7.2C1.8 4 4.6 2.6 7.4 2.8L10 3V.9l4.6 3.5L10 7.9V5.8c-2.6-.5-4.6 0-5.6 2.6z" fill="#6fbf5a" stroke="#3f9a35" stroke-width="0.7" stroke-linejoin="round"/><path d="M14.8 8.8c-.6 3.2-3.4 4.6-6.2 4.4L6 13v2.1L1.4 11.600 6 8.100v2.100c2.600.5 4.600 0 5.600-2.600z" fill="#6fbf5a" stroke="#3f9a35" stroke-width="0.7" stroke-linejoin="round"/></svg>
<div class="t" style="left:33px">Adicionar</div>
<div class="t" style="left:139px">Editar</div>
<div class="t" style="left:222px">Remover</div>
<div class="t" style="left:325px">Exportar</div>
<div class="t" style="left:436px">Importar</div>
<div class="t" style="left:539px">Limpar Filtros</div>
<div class="t" style="left:675px">Ajuda</div>
<div class="t" style="left:757px;letter-spacing:-0.350px">Pesquisar</div>
<div class="abs" style="left:388px;top:16px;width:0;height:0;border:3.500px solid transparent;border-top:4px solid #222;"></div>
</div>
<div id="ghd" class="abs">
<div class="gh s" style="left:0px;width:207px">Categoria<i></i></div>
<div class="gh" style="left:207px;width:417px">Nome</div>
<div class="gh s" style="left:624px;width:110px">Sigla<i></i></div>
<div class="gh s" style="left:734px;width:104px">Sequência<i></i></div>
<div class="gh" style="left:838px;width:207px">Status</div>
<div class="gh" style="left:1045px;width:104px">Código</div>
</div>
<div class="abs" style="left:0;top:137px;width:1166px;height:522px;overflow:hidden;background:#fff">
<div class="grow" style="top:0.70px"><span class="c c0">Inconsistências de Ponto</span><span class="c c1">Inconsistências de Ponto</span><span class="c c2">PSEW0681</span><span class="c c3">1</span><span class="c c4">Em manutenção</span><span class="c c5">12</span></div>
<div class="grow alt" style="top:29.23px"><span class="c c0">Inconsistências de Ponto</span><span class="c c1">Inconsistências de Ponto</span><span class="c c2">PSEW0681</span><span class="c c3">200</span><span class="c c4">Finalizado</span><span class="c c5">314</span></div>
<div class="grow" style="top:57.76px"><span class="c c0">Inconsistências de Ponto</span><span class="c c1">Legenda de Tipos de Ocorrência para Inconsistências - 4 ...</span><span class="c c2">PSEW0681</span><span class="c c3">11</span><span class="c c4">Em manutenção</span><span class="c c5">1</span></div>
<div class="grow alt" style="top:86.29px"><span class="c c0">Inconsistências de Ponto</span><span class="c c1">Inconsistências de Ponto - H.Extra/Previsão</span><span class="c c2">PSEW0681</span><span class="c c3">2</span><span class="c c4">Finalizado</span><span class="c c5">10</span></div>
<div class="grow" style="top:114.82px"><span class="c c0">Inconsistências de Ponto</span><span class="c c1">Inconsistências de Ponto - Grupo Colaboradores</span><span class="c c2">PSEW0681</span><span class="c c3">3</span><span class="c c4">Finalizado</span><span class="c c5">14</span></div>
<div class="grow alt" style="top:143.35px"><span class="c c0">Inconsistências de Ponto</span><span class="c c1">Inconsistências de Ponto - Filial</span><span class="c c2">PSEW0681</span><span class="c c3">4</span><span class="c c4">Finalizado</span><span class="c c5">13</span></div>
<div class="grow" style="top:171.88px"><span class="c c0">Inconsistências de Ponto</span><span class="c c1">Inconsistências de Ponto - Setor - Resumido</span><span class="c c2">PSEW0681</span><span class="c c3">5</span><span class="c c4">Finalizado</span><span class="c c5">11</span></div>
<div class="grow alt" style="top:200.41px"><span class="c c0">Inconsistências de Ponto</span><span class="c c1">Inconsistências de Ponto - Setor</span><span class="c c2">PSEW0681</span><span class="c c3">6</span><span class="c c4">Finalizado</span><span class="c c5">9</span></div>
<div class="grow" style="top:228.94px"><span class="c c0">Inconsistências de Ponto</span><span class="c c1">Legenda de Tipos de Ocorrência para Inconsistências - 6 ...</span><span class="c c2">PSEW0681</span><span class="c c3">12</span><span class="c c4">Finalizado</span><span class="c c5">2</span></div>
<div class="grow alt" style="top:257.47px"><span class="c c0">Inconsistências de Ponto</span><span class="c c1">Inconsistências de Ponto - Setor (Quebra Matrícula)</span><span class="c c2">PSEW0681</span><span class="c c3">7</span><span class="c c4">Finalizado</span><span class="c c5">4</span></div>
<div class="grow" style="top:286.00px"><span class="c c0">Inconsistências de Ponto</span><span class="c c1">Inconsistências de Ponto - Tabular</span><span class="c c2">PSEW0681</span><span class="c c3">8</span><span class="c c4">Em manutenção</span><span class="c c5">204</span></div>
<div class="grow alt" style="top:314.53px"><span class="c c0">Inconsistências de Ponto</span><span class="c c1">Teste Importação</span><span class="c c2">IMP</span><span class="c c3">101</span><span class="c c4">Em desenvolvimento</span><span class="c c5">149</span></div>
<div class="grow" style="top:343.06px"><span class="c c0">Inconsistências de Ponto</span><span class="c c1">Teste Importação 2</span><span class="c c2">IMP</span><span class="c c3">102</span><span class="c c4">Em desenvolvimento</span><span class="c c5">150</span></div>
<div class="grow alt" style="top:371.59px"><span class="c c0">Inconsistências de Ponto</span><span class="c c1">TIPO_MARCACAO</span><span class="c c2">TPMARC</span><span class="c c3">1234</span><span class="c c4">Em desenvolvimento</span><span class="c c5">228</span></div>
<div class="grow" style="top:400.12px"><span class="c c0">Inconsistências de Cálculo</span><span class="c c1">Colaboradores sem Cálculo Mensal Efetuado</span><span class="c c2">PSEW2981</span><span class="c c3">2</span><span class="c c4">Finalizado</span><span class="c c5">15</span></div>
<div class="grow alt" style="top:428.65px"><span class="c c0">Inconsistências de Cálculo</span><span class="c c1">Colaboradores sem Resultados de Cálculo Mensal</span><span class="c c2">PSEW2981</span><span class="c c3">3</span><span class="c c4">Finalizado</span><span class="c c5">17</span></div>
<div class="grow" style="top:457.18px"><span class="c c0">Extrato por Colaborador</span><span class="c c1">Extrato Simples Horas a Compensar Colaboradores</span><span class="c c2">PSEW2661</span><span class="c c3">1</span><span class="c c4">Finalizado</span><span class="c c5">28</span></div>
<div class="grow alt" style="top:485.71px"><span class="c c0">Extrato por Colaborador</span><span class="c c1">Extrato Detalhado Horas a Compensar Colaboradores</span><span class="c c2">PSEW2661</span><span class="c c3">2</span><span class="c c4">Finalizado</span><span class="c c5">25</span></div>
<div class="grow" style="top:514.24px"><span class="c c0">Extrato por Colaborador</span><span class="c c1">Extrato Simples Horas a Compensar Colaboradores - Filial</span><span class="c c2">PSEW2661</span><span class="c c3">3</span><span class="c c4">Finalizado</span><span class="c c5">24</span></div>
</div>
<div class="abs" style="left:1148px;top:137px;width:18px;height:522px;background:#f1f1f1"></div>
<div class="abs" style="left:1153px;top:144.500px;width:0;height:0;border:5px solid transparent;border-top:0;border-bottom:7px solid #8f8f8f"></div>
<div class="abs" style="left:1155.500px;top:159px;width:11px;height:53px;border-radius:5.500px 0 0 5.500px;background:#8f8f8f"></div>
<div class="abs" style="left:1153px;top:647px;width:0;height:0;border:5px solid transparent;border-bottom:0;border-top:7px solid #8f8f8f"></div>
<div class="abs" style="left:0;top:659px;width:1166px;height:94px;background:#fff;border-top:1px solid #99bce8;"></div>
<div class="t" style="left:68px;top:673.500px;font-size:16px">Descrição:</div>
<div class="abs" style="left:150px;top:667px;width:1012px;height:79px;background:#f0f0f0;border:1px solid #b5b8c8"></div>
<div class="t" style="left:155px;top:668.800px;font-size:16.200px;color:#aaaaaa">Selecione um registro para exibir sua descrição !</div>
<div class="abs" style="left:0;top:752px;width:1166px;height:1px;background:#dde8f6"></div>
</div>
<div class="abs" style="left:350px;top:829px;width:1169px;height:32px;background:linear-gradient(#acb4bd,#a3aeba)"></div>
<div class="t b" style="left:1400.500px;top:836px;font-size:14.900px;color:#353535">170 registro(s)</div><div id="ftr" class="abs" style="left:0;top:861px;width:1519px;height:48px;background:linear-gradient(#acb4bd,#a3aeba);border-top:1px solid #7691b3;border-bottom:2px solid #7691b3">
<svg width="201.25" height="41.98" style="left:2px;top:2.700px;overflow:visible" viewBox="0 0 350 73"><circle cx="20" cy="36.400" r="18.800" fill="#c46b1f"/><path d="M23.500 21 L19.800 39.500 L4 39.500 A17 17 0 0 1 12 23.500 Z" fill="#a8b1bc"/><path d="M11 22.500 A18.800 18.800 0 0 1 36.500 27 L31 27.500 A20 20 0 0 0 14.500 24.800 Z" fill="#1f406b"/><path d="M1.500 41.500 L19.300 41.500 L15.500 54.600 A18.800 18.800 0 0 1 1.500 41.500 Z" fill="#1f3f68"/><text transform="translate(40.2 55.6) scale(1.11 1) " font-family="Liberation Sans, sans-serif" font-size="75" fill="#c46b1f">p</text><text transform="translate(84.6 55.6) scale(1.05 1) " font-family="Liberation Sans, sans-serif" font-size="75" fill="#c46b1f">o</text><text transform="translate(127 55.6) scale(1.0 1) " font-family="Liberation Sans, sans-serif" font-size="75" fill="#c46b1f">n</text><text transform="translate(170.5 55.6) scale(0.9 1) " font-family="Liberation Sans, sans-serif" font-size="75" fill="#c46b1f">t</text><text transform="translate(187.3 55.6) scale(1.05 1) " font-family="Liberation Sans, sans-serif" font-size="75" fill="#c46b1f">o</text><text transform="translate(224 55.6) scale(0.56 1) skewX(-22)" font-family="Liberation Sans, sans-serif" font-size="75" fill="#0f456f">s</text><text transform="translate(252.6 55.6) scale(1.03 1) " font-family="Liberation Sans, sans-serif" font-size="75" fill="#0f456f">o</text><text transform="translate(298.5 55.6) scale(0.85 1) " font-family="Liberation Sans, sans-serif" font-size="75" fill="#0f456f">f</text><text transform="translate(319 55.6) scale(0.9 1) " font-family="Liberation Sans, sans-serif" font-size="75" fill="#0f456f">t</text></svg>
<svg style="left:198px;top:31px" width="14" height="12" viewBox="0 0 14 12"><text x="0" y="9" font-family="Liberation Sans, sans-serif" font-size="11" font-weight="bold" fill="#2f7fa8">ex</text></svg>
<div class="t" style="left:221px;top:15px;color:#393939;font-size:15px">7.3.1.0</div>
<div class="vsep" style="left:276px;top:15px;height:19px"></div>
<div class="t" style="left:287px;top:15px;color:#393939;font-size:15.300px">Copyright (c) 2000-2025 Insoft4 Informática Ltda</div>
<div class="vsep" style="left:626px;top:15px;height:19px"></div>
<div class="abs" style="left:1242px;top:4px;width:275px;height:38px;border-radius:5px;background:#0670c7;"></div>
<div class="t b" style="left:1249px;top:13px;color:#d4d4d4;font-size:15px">Solicitar Atendimento Técnico</div>
<svg style="left:1484px;top:9px" width="30" height="28" viewBox="0 0 30 28">
<path d="M14 1.500h9a5 5 0 0 1 5 5v3a5 5 0 0 1 -5 5h-1l-3.500 3v-3h-4.500a5 5 0 0 1 -5 -5v-3a5 5 0 0 1 5 -5z" fill="none" stroke="#8fb6de" stroke-width="1.500"/>
<circle cx="15" cy="8" r="0.900" fill="#8fb6de"/><circle cx="18.500" cy="8" r="0.900" fill="#8fb6de"/><circle cx="22" cy="8" r="0.900" fill="#8fb6de"/>
<path d="M7.500 8.500a6 6 0 0 0 -5 6v1.500a6 6 0 0 0 4 5.500l-.5 4 4.500-3.500h3a6 6 0 0 0 5-3" fill="none" stroke="#8fb6de" stroke-width="1.500"/></svg>
</div>
</body></html>
